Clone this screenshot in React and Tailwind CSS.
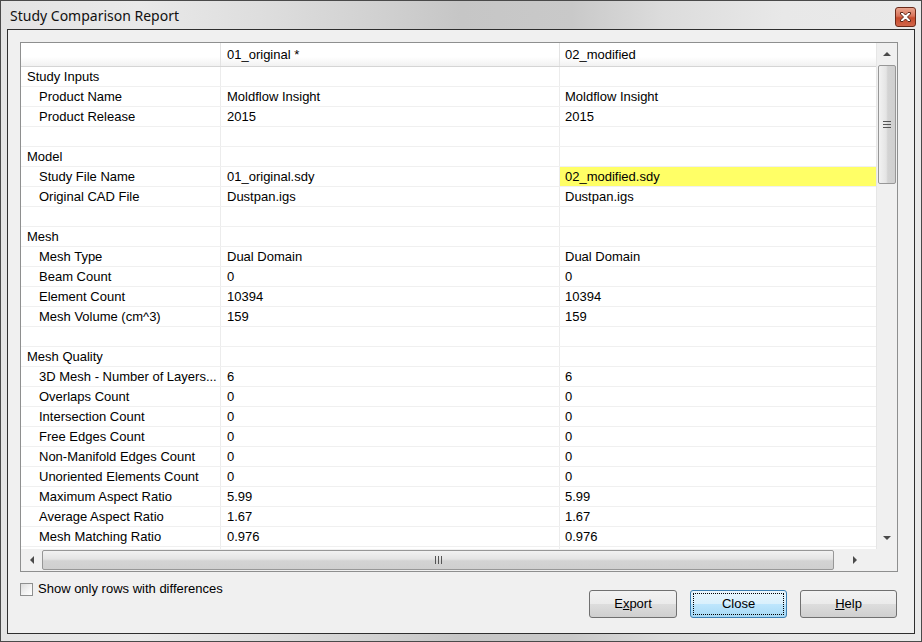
import { useState } from 'react';

const rows = [
  { label: 'Study Inputs', group: true },
  { label: 'Product Name', a: 'Moldflow Insight', b: 'Moldflow Insight' },
  { label: 'Product Release', a: '2015', b: '2015' },
  { blank: true },
  { label: 'Model', group: true },
  { label: 'Study File Name', a: '01_original.sdy', b: '02_modified.sdy', diff: true },
  { label: 'Original CAD File', a: 'Dustpan.igs', b: 'Dustpan.igs' },
  { blank: true },
  { label: 'Mesh', group: true },
  { label: 'Mesh Type', a: 'Dual Domain', b: 'Dual Domain' },
  { label: 'Beam Count', a: '0', b: '0' },
  { label: 'Element Count', a: '10394', b: '10394' },
  { label: 'Mesh Volume (cm^3)', a: '159', b: '159' },
  { blank: true },
  { label: 'Mesh Quality', group: true },
  { label: '3D Mesh - Number of Layers...', a: '6', b: '6' },
  { label: 'Overlaps Count', a: '0', b: '0' },
  { label: 'Intersection Count', a: '0', b: '0' },
  { label: 'Free Edges Count', a: '0', b: '0' },
  { label: 'Non-Manifold Edges Count', a: '0', b: '0' },
  { label: 'Unoriented Elements Count', a: '0', b: '0' },
  { label: 'Maximum Aspect Ratio', a: '5.99', b: '5.99' },
  { label: 'Average Aspect Ratio', a: '1.67', b: '1.67' },
  { label: 'Mesh Matching Ratio', a: '0.976', b: '0.976' },
  { blank: true },
];

function Row({ row }) {
  return (
    <div className="flex h-[20px] shrink-0 border-b border-[#f0f0f0]">
      <div
        className={`w-[200px] shrink-0 border-r border-[#ececec] flex items-center pt-[1px] whitespace-nowrap overflow-hidden ${
          row.group ? 'pl-[6px]' : 'pl-[18px]'
        }`}
      >
        {row.label}
      </div>
      <div className="w-[339px] shrink-0 border-r border-[#ececec] flex items-center pt-[1px] pl-[6px]">{row.a}</div>
      <div className={`flex-1 flex items-center pt-[1px] pl-[5px] ${row.diff ? 'bg-[#ffff66]' : ''}`}>{row.b}</div>
    </div>
  );
}

function Triangle({ dir }) {
  const pts = {
    up: '0,5 4,1 8,5',
    down: '0,1 4,5 8,1',
    left: '5,0 1,4 5,8',
    right: '1,0 5,4 1,8',
  }[dir];
  const vertical = dir === 'up' || dir === 'down';
  return (
    <svg width={vertical ? 8 : 6} height={vertical ? 6 : 8} viewBox={vertical ? '0 0 8 6' : '0 0 6 8'}>
      <polygon points={pts} fill="#4a4a4a" />
    </svg>
  );
}

function CloseGlyph() {
  return (
    <svg width="13" height="12" viewBox="0 0 13 12">
      <path
        d="M1.5 1.5 L4 1.5 L6.5 4 L9 1.5 L11.5 1.5 L11.5 3 L8.5 6 L11.5 9 L11.5 10.5 L9 10.5 L6.5 8 L4 10.5 L1.5 10.5 L1.5 9 L4.5 6 L1.5 3 Z"
        fill="#ffffff"
        stroke="#5b2517"
        strokeWidth="1"
        strokeLinejoin="round"
      />
    </svg>
  );
}

function Button({ children, width, focused }) {
  return (
    <div
      className={`h-[28px] rounded-[3px] border flex items-center justify-center p-[2px] ${width} ${
        focused
          ? 'border-[#3c7fb1] bg-[linear-gradient(180deg,#eaf6fd_0%,#d9f0fc_50%,#bee6fd_51%,#a7d9f5_100%)]'
          : 'border-[#707070] bg-[linear-gradient(180deg,#f2f2f2_0%,#ebebeb_50%,#dddddd_51%,#cfcfcf_100%)]'
      }`}
    >
      <div
        className={`w-full h-full flex items-center justify-center ${
          focused ? 'border border-dotted border-black' : ''
        }`}
      >
        {children}
      </div>
    </div>
  );
}

export default function App() {
  const [onlyDiff, setOnlyDiff] = useState(false);
  const shown = onlyDiff ? rows.filter((r) => r.diff || r.group) : rows;

  return (
    <div
      className="w-[922px] h-[642px] flex flex-col border border-[#4a4a4a] bg-[linear-gradient(90deg,#e4e4e4_0%,#e9e9e9_15%,#dedede_28%,#d2d2d2_40%,#c6c6c6_50%,#c9c9c9_62%,#dcdcdc_72%,#e8e8e8_85%,#eaeaea_100%)] text-[13px] text-black"
      style={{ fontFamily: '"Liberation Sans", Arial, sans-serif' }}
    >
      {/* title bar */}
      <div className="h-[28px] shrink-0 flex items-center justify-between pl-[9px] pr-[5px]">
        <span className="text-[14px] text-[#111]" style={{ fontFamily: '"Noto Sans", "Open Sans", sans-serif' }}>
          Study Comparison Report
        </span>
        <div className="w-[21px] h-[20px] mt-[3px] rounded-[3px] border border-[#6b2a1a] bg-[linear-gradient(180deg,#e9a58f_0%,#d9735a_45%,#c64a2c_55%,#d2664a_100%)] flex items-center justify-center">
          <CloseGlyph />
        </div>
      </div>

      {/* client area */}
      <div className="flex-1 mx-[6px] mb-[7px] border border-[#2e2e2e] bg-[#f0f0f0] flex flex-col pl-[12px] pr-[16px] pt-[12px]">
        {/* grid */}
        <div className="w-[878px] h-[530px] border border-[#8e8f8f] bg-white flex flex-col">
          <div className="flex h-[506px]">
            <div className="flex-1 flex flex-col overflow-hidden">
              <div className="h-[24px] shrink-0 flex border-b border-[#d5d5d5] bg-[linear-gradient(180deg,#ffffff_0%,#ffffff_60%,#f1f1f1_100%)]">
                <div className="w-[200px] border-r border-[#e3e3e3]" />
                <div className="w-[339px] border-r border-[#e3e3e3] flex items-center pt-[1px] pl-[6px]">01_original *</div>
                <div className="flex-1 flex items-center pt-[1px] pl-[5px]">02_modified</div>
              </div>
              {shown.map((row, i) => (row.blank ? <Row key={i} row={{ label: '' }} /> : <Row key={i} row={row} />))}
            </div>
            {/* vertical scrollbar */}
            <div className="w-[21px] shrink-0 bg-[#f0f0f0] flex flex-col border-l border-[#e6e6e6]">
              <div className="h-[22px] flex items-center justify-center">
                <Triangle dir="up" />
              </div>
              <div className="h-[119px] mx-[1px] rounded-[2px] border border-[#979797] bg-[linear-gradient(90deg,#f2f2f2_0%,#e4e4e4_45%,#d3d3d3_55%,#cfcfcf_100%)] flex items-center justify-center">
                <div className="flex flex-col gap-[2px]">
                  <div className="w-[8px] h-[1px] bg-[#555]" />
                  <div className="w-[8px] h-[1px] bg-[#555]" />
                  <div className="w-[8px] h-[1px] bg-[#555]" />
                </div>
              </div>
              <div className="flex-1" />
              <div className="h-[22px] flex items-center justify-center">
                <Triangle dir="down" />
              </div>
            </div>
          </div>
          {/* horizontal scrollbar */}
          <div className="flex h-[22px] shrink-0 bg-[#f0f0f0]">
            <div className="w-[21px] flex items-center justify-center">
              <Triangle dir="left" />
            </div>
            <div className="w-[792px] my-[1px] rounded-[2px] border border-[#979797] bg-[linear-gradient(180deg,#f2f2f2_0%,#e4e4e4_45%,#d3d3d3_55%,#cfcfcf_100%)] flex items-center justify-center">
              <div className="flex gap-[2px]">
                <div className="w-[1px] h-[8px] bg-[#555]" />
                <div className="w-[1px] h-[8px] bg-[#555]" />
                <div className="w-[1px] h-[8px] bg-[#555]" />
              </div>
            </div>
            <div className="flex-1 flex items-center justify-center">
              <Triangle dir="right" />
            </div>
            <div className="w-[21px] bg-[#f0f0f0]" />
          </div>
        </div>

        {/* bottom area */}
        <div className="flex justify-between">
          <label className="flex items-center gap-[5px] mt-[10px] h-[14px] self-start cursor-default">
            <span
              onClick={() => setOnlyDiff(!onlyDiff)}
              className="w-[13px] h-[13px] border border-[#8e8f8f] bg-[linear-gradient(135deg,#dcdcdc_0%,#f4f4f4_60%,#ffffff_100%)] flex items-center justify-center"
            >
              {onlyDiff && (
                <svg width="9" height="9" viewBox="0 0 9 9">
                  <path d="M1 4.5 L3.5 7 L8 1.5" stroke="#222" strokeWidth="1.6" fill="none" />
                </svg>
              )}
            </span>
            <span>Show only rows with differences</span>
          </label>
          <div className="flex gap-[13px] mt-[18px] mr-[1px]">
            <Button width="w-[88px]">
              <span>
                E<span className="underline">x</span>port
              </span>
            </Button>
            <Button width="w-[97px]" focused>
              Close
            </Button>
            <Button width="w-[97px]">
              <span>
                <span className="underline">H</span>elp
              </span>
            </Button>
          </div>
        </div>
      </div>
    </div>
  );
}
